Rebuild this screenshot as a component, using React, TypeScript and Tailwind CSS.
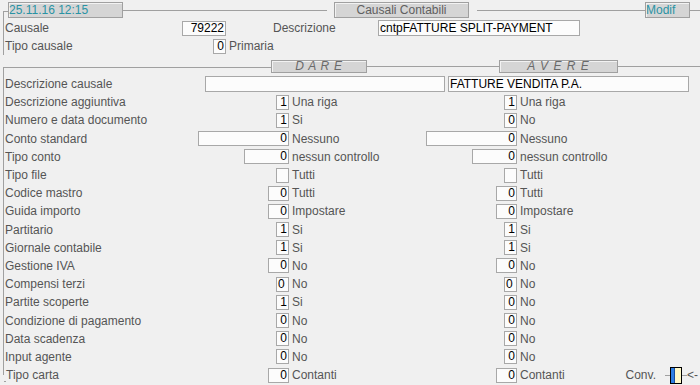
import React from 'react';

type Cell = { v: string; w: string; left?: boolean };
type Row = { label: string; dare: Cell; dareText: string; avere: Cell; avereText: string };

const rows: Row[] = [
  { label: 'Descrizione aggiuntiva', dare: { v: '1', w: 'w-[13px]' }, dareText: 'Una riga', avere: { v: '1', w: 'w-[13px]' }, avereText: 'Una riga' },
  { label: 'Numero e data documento', dare: { v: '1', w: 'w-[13px]' }, dareText: 'Si', avere: { v: '0', w: 'w-[13px]' }, avereText: 'No' },
  { label: 'Conto standard', dare: { v: '0', w: 'w-[91px]' }, dareText: 'Nessuno', avere: { v: '0', w: 'w-[91px]' }, avereText: 'Nessuno' },
  { label: 'Tipo conto', dare: { v: '0', w: 'w-[45px]' }, dareText: 'nessun controllo', avere: { v: '0', w: 'w-[45px]' }, avereText: 'nessun controllo' },
  { label: 'Tipo file', dare: { v: '', w: 'w-[13px]' }, dareText: 'Tutti', avere: { v: '', w: 'w-[13px]' }, avereText: 'Tutti' },
  { label: 'Codice mastro', dare: { v: '0', w: 'w-[21px]' }, dareText: 'Tutti', avere: { v: '0', w: 'w-[21px]' }, avereText: 'Tutti' },
  { label: 'Guida importo', dare: { v: '0', w: 'w-[21px]' }, dareText: 'Impostare', avere: { v: '0', w: 'w-[21px]' }, avereText: 'Impostare' },
  { label: 'Partitario', dare: { v: '1', w: 'w-[13px]' }, dareText: 'Si', avere: { v: '1', w: 'w-[13px]' }, avereText: 'Si' },
  { label: 'Giornale contabile', dare: { v: '1', w: 'w-[13px]' }, dareText: 'Si', avere: { v: '1', w: 'w-[13px]' }, avereText: 'Si' },
  { label: 'Gestione IVA', dare: { v: '0', w: 'w-[21px]' }, dareText: 'No', avere: { v: '0', w: 'w-[21px]' }, avereText: 'No' },
  { label: 'Compensi terzi', dare: { v: '0', w: 'w-[13px]', left: true }, dareText: 'No', avere: { v: '0', w: 'w-[13px]', left: true }, avereText: 'No' },
  { label: 'Partite scoperte', dare: { v: '1', w: 'w-[13px]' }, dareText: 'Si', avere: { v: '0', w: 'w-[13px]' }, avereText: 'No' },
  { label: 'Condizione di pagamento', dare: { v: '0', w: 'w-[13px]' }, dareText: 'No', avere: { v: '0', w: 'w-[13px]' }, avereText: 'No' },
  { label: 'Data scadenza', dare: { v: '0', w: 'w-[13px]' }, dareText: 'No', avere: { v: '0', w: 'w-[13px]' }, avereText: 'No' },
  { label: 'Input agente', dare: { v: '0', w: 'w-[13px]' }, dareText: 'No', avere: { v: '0', w: 'w-[13px]' }, avereText: 'No' },
];

const Field = ({ v, w, left }: Cell) => (
  <div
    className={`${w} h-[15px] shrink-0 border border-[#a8a8a8] bg-[#fcfcfc] px-px text-black leading-[13px] ${left ? 'text-left' : 'text-right'}`}
  >
    {v}
  </div>
);

const HeadBox = ({ children, className }: { children: React.ReactNode; className: string }) => (
  <div className={`shrink-0 border border-[#a0a0a0] bg-[#d5d5d5] shadow-[inset_1px_1px_0_#f2f2f2] ${className}`}>{children}</div>
);

const Line = ({ className }: { className: string }) => <div className={`h-px bg-[#a0a0a0] ${className}`} />;

const ConvIcon = () => (
  <div className="ml-auto mr-[2px] flex items-center text-[#555]">
    <span>Conv.</span>
    <Line className="ml-[9px] w-[5px]" />
    <div className="flex h-[17px] w-[12px] border border-black">
      <div className="w-[3px] bg-[#2f7fe3]" />
      <div className="w-px bg-[#1b4e9a]" />
      <div className="flex-1 bg-[#fff9c9]" />
    </div>
    <Line className="w-[5px]" />
    <span className="whitespace-nowrap">&lt;-</span>
  </div>
);

export default function App() {
  return (
    <div className="h-[385px] w-[700px] overflow-hidden bg-[#f0f0f0] pt-[2px] font-['Liberation_Sans',Arial,sans-serif] text-[12px] text-[#555]">
      {/* testata */}
      <div className="ml-[3px] flex h-[16px] items-center">
        <div className="h-[7px] w-[5px] self-end border-l border-t border-[#a0a0a0]" />
        <HeadBox className="h-[16px] w-[115px] leading-[14px] text-[#2a93a4]">25.11.16 12:15</HeadBox>
        <Line className="w-[204px]" />
        <HeadBox className="ml-[7px] h-[16px] w-[135px] text-center leading-[14px] text-[#606060]">Causali Contabili</HeadBox>
        <Line className="ml-[8px] w-[168px]" />
        <HeadBox className="h-[16px] w-[45px] leading-[14px] text-[#2a93a4]">Modif</HeadBox>
        <Line className="flex-1" />
      </div>

      <div className="ml-[3px] border-l border-[#a0a0a0] pt-px">
        <div className="flex h-[18px] items-center">
          <div className="w-[178px] pl-px">Causale</div>
          <Field v="79222" w="w-[44px]" />
          <div className="ml-[47px] w-[105px]">Descrizione</div>
          <div className="h-[16px] w-[202px] border border-[#a8a8a8] bg-[#fcfcfc] px-px leading-[14px] text-black">cntpFATTURE SPLIT-PAYMENT</div>
        </div>
        <div className="flex h-[18px] items-center">
          <div className="w-[209px] pl-px">Tipo causale</div>
          <Field v="0" w="w-[13px]" />
          <div className="pl-[3px]">Primaria</div>
        </div>
      </div>

      {/* DARE / AVERE */}
      <div className="ml-[3px] mt-[5px] flex h-[13px] items-center">
        <div className="h-[6px] w-[268px] self-end border-l border-t border-[#a0a0a0]" />
        <HeadBox className="h-[13px] w-[96px] text-center italic leading-[11px] tracking-[0.75px] text-[#6a6a6a]">D A R E</HeadBox>
        <Line className="w-[132px]" />
        <HeadBox className="h-[13px] w-[119px] text-center italic leading-[11px] tracking-[1px] text-[#6a6a6a]">A V E R E</HeadBox>
        <Line className="flex-1" />
      </div>

      <div className="ml-[3px] h-[302px] border-l border-[#a0a0a0] pt-[2px]">
        <div className="flex h-[18.2px] items-center">
          <div className="w-[201px] pl-px">Descrizione causale</div>
          <div className="h-[16px] w-[240px] border border-[#a8a8a8] bg-[#fcfcfc]" />
          <div className="ml-[3px] h-[16px] w-[241px] border border-[#a8a8a8] bg-[#fcfcfc] px-px leading-[14px] text-black">FATTURE VENDITA P.A.</div>
        </div>
        {rows.map((r) => (
          <div key={r.label} className="flex h-[18.2px] items-center">
            <div className="flex w-[285px] items-center justify-between">
              <span className="pl-px">{r.label}</span>
              <Field {...r.dare} />
            </div>
            <div className="flex w-[228px] items-center justify-between">
              <span className="pl-[3px]">{r.dareText}</span>
              <Field {...r.avere} />
            </div>
            <span className="pl-[3px]">{r.avereText}</span>
          </div>
        ))}
        <div className="flex h-[18.2px] items-center">
          <div className="flex w-[285px] items-center justify-between">
            <span className="flex items-end">
              <span className="mb-[2px] h-px w-[2px] bg-[#a0a0a0]" />
              <span>Tipo carta</span>
            </span>
            <Field v="0" w="w-[21px]" />
          </div>
          <div className="flex w-[228px] items-center justify-between">
            <span className="pl-[3px]">Contanti</span>
            <Field v="0" w="w-[21px]" />
          </div>
          <span className="pl-[3px]">Contanti</span>
          <ConvIcon />
        </div>
      </div>
    </div>
  );
}
